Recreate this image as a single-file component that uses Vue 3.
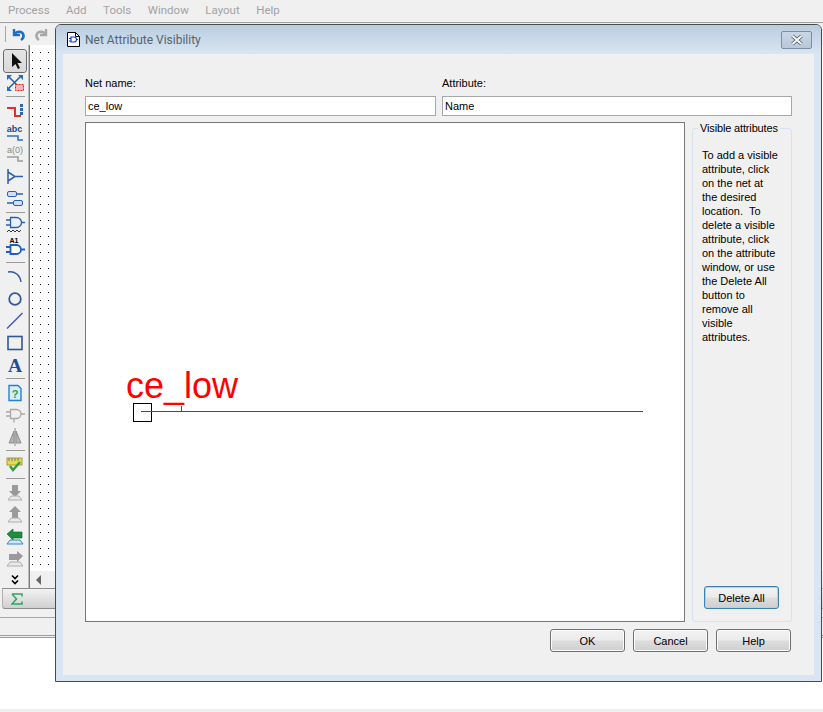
<template>
  <div class="app">
    <!-- Main application behind the dialog -->
    <div class="menubar">
      <span v-for="m in menus" :key="m" class="menu-item">{{ m }}</span>
    </div>
    <div class="toolbar">
      <span class="toolbar-sep"></span>
      <svg class="toolbar-icon" width="16" height="16" viewBox="0 0 16 16">
        <path d="M4 3v6h6" fill="none" stroke="#1c6fc4" stroke-width="2.4" />
        <path d="M4.5 8.5C7 4.5 13 5 13.5 9.5 13.7 11.5 12.5 13 11 14" fill="none" stroke="#1c6fc4" stroke-width="2.6" />
      </svg>
      <svg class="toolbar-icon" width="16" height="16" viewBox="0 0 16 16">
        <path d="M12 3v6H6" fill="none" stroke="#a8a8a8" stroke-width="2.4" />
        <path d="M11.5 8.5C9 4.5 3 5 2.5 9.5 2.3 11.5 3.5 13 5 14" fill="none" stroke="#a8a8a8" stroke-width="2.6" />
      </svg>
    </div>
    <div class="workspace">
      <div class="toolstrip">
        <div class="tool tool--active">
          <svg width="22" height="22" viewBox="0 0 22 22"><path d="M8 3v14l3.500-3 2.500 5 2-1-2.500-5H18z" fill="#111" /></svg>
        </div>
        <div class="tool">
          <svg width="22" height="22" viewBox="0 0 22 22">
            <path d="M4 4l13 13M17 4L4 17" stroke="#1f5fb0" stroke-width="1.500" />
            <path d="M3 3h5L3 8zM19 3v5l-5-5zM3 19v-5l5 5z" fill="#1f6fc4" />
            <rect x="11.500" y="12.500" width="8" height="6" fill="#f5b5b5" stroke="#e02020" stroke-dasharray="2 1" />
          </svg>
        </div>
        <div class="tool-sep"></div>
        <div class="tool">
          <svg width="22" height="22" viewBox="0 0 22 22">
            <path d="M3 8h8v8h6" fill="none" stroke="#e0302a" stroke-width="2" />
            <path d="M17.500 4v11" stroke="#2c63b5" stroke-width="3" stroke-dasharray="3 1" />
          </svg>
        </div>
        <div class="tool">
          <svg width="22" height="22" viewBox="0 0 22 22">
            <text x="10.500" y="10" class="tool-text tool-text--abc">abc</text>
            <path d="M3 14h11v4h5" fill="none" stroke="#2c6fc0" stroke-width="1.500" />
          </svg>
        </div>
        <div class="tool">
          <svg width="22" height="22" viewBox="0 0 22 22">
            <text x="11" y="9" class="tool-text tool-text--index">a(0)</text>
            <path d="M3 13h11v4h5" fill="none" stroke="#9a9a9a" stroke-width="1.500" />
          </svg>
        </div>
        <div class="tool">
          <svg width="22" height="22" viewBox="0 0 22 22">
            <path d="M4 3v15M4 6l7 4.500-7 4.500M11 10.500h8" fill="none" stroke="#2e5ea8" stroke-width="1.500" />
          </svg>
        </div>
        <div class="tool">
          <svg width="22" height="22" viewBox="0 0 22 22">
            <rect x="3.500" y="3.500" width="9" height="5" rx="1.500" fill="#cfe0f5" stroke="#2e5ea8" />
            <path d="M13 6h6M3 15h6" stroke="#2e5ea8" stroke-width="1.500" />
            <rect x="9.500" y="12.500" width="9" height="5" rx="1.500" fill="#cfe0f5" stroke="#2e5ea8" />
          </svg>
        </div>
        <div class="tool-sep"></div>
        <div class="tool">
          <svg width="22" height="22" viewBox="0 0 22 22">
            <path d="M6.500 1.500h6a5 5 0 0 1 0 10h-6z" fill="#e8f0fa" stroke="#2e5ea8" stroke-width="1.300" />
            <path d="M2 4h4M2 9h4M17.500 6.500H21" stroke="#2e5ea8" stroke-width="1.300" />
            <path d="M3 16l2-2 2 2 2-2 2 2 2-2 2 2 2-2" fill="none" stroke="#333" />
          </svg>
        </div>
        <div class="tool">
          <svg width="22" height="22" viewBox="0 0 22 22">
            <text x="10" y="5" class="tool-text tool-text--a1">A1</text>
            <path d="M6.500 7h6a4.500 4.500 0 0 1 0 9h-6z" fill="#fff" stroke="#1c5fc0" stroke-width="1.800" />
            <path d="M2 9h4M2 14h4M17.500 11.500H21" stroke="#1c5fc0" stroke-width="1.800" />
          </svg>
        </div>
        <div class="tool-sep"></div>
        <div class="tool">
          <svg width="22" height="22" viewBox="0 0 22 22"><path d="M4 6c7-1 12 3 13 10" fill="none" stroke="#33589f" stroke-width="1.500" /></svg>
        </div>
        <div class="tool">
          <svg width="22" height="22" viewBox="0 0 22 22"><circle cx="11" cy="11" r="5.800" fill="none" stroke="#33589f" stroke-width="1.800" /></svg>
        </div>
        <div class="tool">
          <svg width="22" height="22" viewBox="0 0 22 22"><path d="M3 18.500L18.500 3" stroke="#4a55a5" stroke-width="1.500" /></svg>
        </div>
        <div class="tool">
          <svg width="22" height="22" viewBox="0 0 22 22"><rect x="4" y="4.500" width="14" height="13" fill="none" stroke="#2d5a96" stroke-width="1.600" /></svg>
        </div>
        <div class="tool">
          <svg width="22" height="22" viewBox="0 0 22 22"><text x="11" y="17.500" class="tool-text tool-text--big">A</text></svg>
        </div>
        <div class="tool-sep"></div>
        <div class="tool">
          <svg width="22" height="22" viewBox="0 0 22 22">
            <path d="M5 3.500h9l3 3v12H5z" fill="#d8edfb" stroke="#2a7fd0" stroke-width="1.400" />
            <text x="11" y="16" class="tool-text tool-text--help">?</text>
          </svg>
        </div>
        <div class="tool">
          <svg width="22" height="22" viewBox="0 0 22 22">
            <path d="M6.500 5.500h6a4.500 4.500 0 0 1 0 9h-6z" fill="#efefef" stroke="#a8a8a8" stroke-width="1.300" />
            <path d="M2 8h4M2 12h4M17 10h4M10 14.500v4" stroke="#a8a8a8" stroke-width="1.300" />
          </svg>
        </div>
        <div class="tool">
          <svg width="22" height="22" viewBox="0 0 22 22">
            <path d="M10 5L5 17h5zM12 5l5 12h-5z" fill="#b4b4b4" stroke="#8e8e8e" />
            <path d="M11 2v18" stroke="#8e8e8e" />
          </svg>
        </div>
        <div class="tool-sep"></div>
        <div class="tool">
          <svg width="22" height="22" viewBox="0 0 22 22">
            <rect x="3" y="4" width="15" height="7" fill="#e8d84a" stroke="#a89e30" />
            <path d="M5 4v3M8 4v3M11 4v3M14 4v3" stroke="#6d7a9c" />
            <path d="M6 12l3 4 7-8" fill="none" stroke="#2f9e3c" stroke-width="2.400" />
          </svg>
        </div>
        <div class="tool-sep"></div>
        <div class="tool">
          <svg width="22" height="22" viewBox="0 0 22 22">
            <path d="M8 3h6v6h3l-6 6-6-6h3z" fill="#9a9a9a" />
            <path d="M7 14h8l3 4H4z" fill="#e9e9e9" stroke="#adadad" />
          </svg>
        </div>
        <div class="tool">
          <svg width="22" height="22" viewBox="0 0 22 22">
            <path d="M11 2l6 6h-3v7H8V8H5z" fill="#9a9a9a" />
            <path d="M7 14h8l3 4H4z" fill="#e9e9e9" stroke="#adadad" />
          </svg>
        </div>
        <div class="tool">
          <svg width="22" height="22" viewBox="0 0 22 22">
            <path d="M3 8l6-5v3h9v6H9v2z" fill="#1d8f3c" stroke="#0f5f26" stroke-width=".6" />
            <path d="M6 14h10l3 4H3z" fill="#cfe6fb" stroke="#3b82c8" />
          </svg>
        </div>
        <div class="tool">
          <svg width="22" height="22" viewBox="0 0 22 22">
            <path d="M19 8l-6-5v3H5v6h8v2z" fill="#9a9a9a" />
            <path d="M6 14h10l3 4H3z" fill="#e9e9e9" stroke="#adadad" />
          </svg>
        </div>
        <div class="tool tool--more">
          <svg width="12" height="12" viewBox="0 0 12 12">
            <path d="M3 1.500l3 3 3-3M3 6.500l3 3 3-3" fill="none" stroke="#000" stroke-width="1.600" />
          </svg>
        </div>
      </div>
      <div class="sheet">
        <div class="sheet-grid"></div>
        <div class="sheet-scroll">
          <svg width="6" height="10" viewBox="0 0 6 10"><path d="M5 0v10L0 5z" fill="#666" /></svg>
        </div>
      </div>
    </div>
    <div class="tabs">
      <div class="tab">
        <svg width="12" height="12" viewBox="0 0 12 12">
          <path d="M1 1h10v2.500M11 8.500V11H1l4.500-5L1 1" fill="none" stroke="#2ea864" stroke-width="1.500" />
        </svg>
      </div>
    </div>
    <div class="status-row"></div>
    <div class="blank"></div>
    <div class="footer"></div>

    <!-- Dialog window -->
    <div class="window">
      <div class="titlebar">
        <svg width="13" height="15" viewBox="0 0 13 15">
          <path d="M.5.500h8l4 4v10H.5z" fill="#fff" stroke="#000" />
          <path d="M8.500.500v4h4" fill="none" stroke="#000" />
          <path d="M4 5h3a2.500 2.500 0 0 1 0 5H4zM2 6.500h2M2 9h2M9.500 7.500H11" fill="none" stroke="#1438e0" stroke-width="1.200" />
        </svg>
        <span class="title">Net Attribute Visibility</span>
        <button class="close-btn" type="button">
          <svg width="14" height="12" viewBox="0 0 14 12">
            <path d="M2.500 2l9 8M11.500 2l-9 8" stroke="#45525f" stroke-width="3.600" />
            <path d="M2.500 2l9 8M11.500 2l-9 8" stroke="#fff" stroke-width="2" />
          </svg>
        </button>
      </div>
      <div class="client">
        <div class="fields">
          <label class="field">
            <span class="field-label">Net name:</span>
            <div class="field-input">ce_low</div>
          </label>
          <label class="field">
            <span class="field-label">Attribute:</span>
            <div class="field-input">Name</div>
          </label>
        </div>
        <div class="main">
          <div class="preview">
            <span class="net-label">ce_low</span>
            <svg class="net" width="520" height="22" viewBox="0 0 520 22">
              <rect x=".5" y=".5" width="18" height="18" fill="none" stroke="#000" />
              <path d="M8 8.500h502M48.500 3v5" fill="none" stroke="#f00" />
            </svg>
          </div>
          <fieldset class="group">
            <legend>Visible attributes</legend>
            <p class="group-text">
              <span v-for="(line, i) in helpLines" :key="i" class="group-line">{{ line }}</span>
            </p>
            <button class="btn btn--focus" type="button">Delete All</button>
          </fieldset>
        </div>
        <div class="actions">
          <button class="btn" type="button">OK</button>
          <button class="btn" type="button">Cancel</button>
          <button class="btn" type="button">Help</button>
        </div>
      </div>
    </div>
  </div>
</template>

<script setup>
const menus = ['Process', 'Add', 'Tools', 'Window', 'Layout', 'Help']

const helpLines = [
  'To add a visible',
  'attribute, click',
  'on the net at',
  'the desired',
  'location.  To',
  'delete a visible',
  'attribute, click',
  'on the attribute',
  'window, or use',
  'the Delete All',
  'button to',
  'remove all',
  'visible',
  'attributes.',
]
</script>

<style>
html,
body {
  margin: 0;
  background: #fff;
}
</style>

<style scoped>
.app {
  position: relative;
  width: 823px;
  height: 712px;
  overflow: hidden;
  display: flex;
  flex-direction: column;
  background: #fff;
  font-family: "Liberation Sans", Arial, sans-serif;
  font-size: 11px;
  color: #000;
}

.menubar {
  height: 23px;
  flex: none;
  display: flex;
  align-items: center;
  gap: 16.500px;
  padding-left: 8px;
  padding-bottom: 3px;
  background: #f0f0f0;
  border-bottom: 1px solid #a0a0a0;
  box-sizing: border-box;
  font-family: Roboto, sans-serif;
  font-size: 11.500px;
  color: #a3a3a3;
}

.toolbar {
  height: 22px;
  flex: none;
  display: flex;
  align-items: center;
  gap: 4px;
  padding-left: 5px;
  background: #f0f0f0;
}

.toolbar-sep {
  width: 1px;
  height: 16px;
  background: #a8a8a8;
}

.toolbar-icon {
  flex: none;
}

.toolbar-icon + .toolbar-icon {
  margin-left: 4px;
}

.workspace {
  flex: none;
  height: 543px;
  display: flex;
}

.toolstrip {
  width: 30px;
  flex: none;
  box-sizing: border-box;
  padding: 5px 0 0 4px;
  background: #f0f0f0;
  border-right: 1px solid #7c7c7c;
  box-shadow: inset -1px 0 #bdbdbd;
}

.tool {
  width: 22px;
  height: 22px;
}

.tool svg {
  display: block;
}

.tool--active {
  background: linear-gradient(#e4e4e4, #d8d8d8);
  border-radius: 3px;
  box-shadow: 0 0 0 1px #6a6a6a;
}

.tool--more {
  display: flex;
  justify-content: center;
  padding-top: 4px;
  height: 14px;
}

.tool-sep {
  width: 19px;
  height: 1px;
  margin: 2px 0 3px 2px;
  background: #9a9a9a;
}

.tool-text {
  text-anchor: middle;
  font-family: "Liberation Sans", Arial, sans-serif;
}

.tool-text--abc {
  font-size: 9px;
  font-weight: 700;
  fill: #27477e;
}

.tool-text--index {
  font-size: 9px;
  fill: #8a8a8a;
}

.tool-text--a1 {
  font-size: 7px;
  font-weight: 700;
  fill: #000;
}

.tool-text--big {
  font-family: "Liberation Serif", serif;
  font-size: 19.500px;
  font-weight: 700;
  fill: #1e4f97;
}

.tool-text--help {
  font-size: 11px;
  font-weight: 700;
  fill: #2f9e3c;
}

.sheet {
  flex: 1;
  display: flex;
  flex-direction: column;
}

.sheet-grid {
  flex: 1;
  background-color: #fff;
  background-image: conic-gradient(from 270deg at 1px 1px, #000 25%, #fff 0);
  background-size: 8px 8px;
  background-position: 2px 7px;
}

.sheet-scroll {
  height: 17px;
  display: flex;
  align-items: center;
  padding-left: 6px;
  background: #f0f0f0;
}

.tabs {
  flex: none;
  height: 30px;
  box-sizing: border-box;
  padding-left: 2px;
  background: #f0f0f0;
  border-bottom: 1px solid #a6a6a6;
}

.tab {
  height: 21px;
  box-sizing: border-box;
  display: flex;
  align-items: center;
  padding-left: 8px;
  border-top: 1px solid #8c8c8c;
  border-left: 1px solid #b0b0b0;
  border-bottom: 1px solid #8c8c8c;
  border-bottom-left-radius: 3px;
  background: linear-gradient(#f2f2f2, #d0d0d0);
}

.status-row {
  flex: none;
  height: 20px;
  box-sizing: border-box;
  background: #f0f0f0;
  border-bottom: 3px double #9a9a9a;
}

.blank {
  flex: 1;
  background: #fff;
}

.footer {
  flex: none;
  height: 3px;
  background: #efefef;
}

/* window sits on top of the main app */
.window {
  position: absolute;
  left: 55px;
  top: 24px;
  width: 767px;
  height: 658px;
  box-sizing: border-box;
  display: flex;
  flex-direction: column;
  padding: 0 7px 6px;
  background: #d9e5f2;
  border: 1px solid #4a4a4a;
  border-radius: 6px 6px 0 0;
}

.titlebar {
  height: 29px;
  flex: none;
  display: flex;
  align-items: center;
  gap: 5px;
  margin: 0 -7px;
  padding: 0 9px 0 11px;
  border-radius: 5px 5px 0 0;
  background: linear-gradient(#b9cde0, #d9e5f2);
}

.title {
  flex: 1;
  font-family: Roboto, sans-serif;
  font-size: 12px;
  color: #55636f;
}

.close-btn {
  width: 31px;
  height: 18px;
  padding: 0;
  display: flex;
  align-items: center;
  justify-content: center;
  border: 1px solid #7d8ea4;
  border-radius: 2px;
  background: linear-gradient(#c9d6e4, #b8c8da);
}

.client {
  flex: 1;
  min-height: 0;
  display: flex;
  flex-direction: column;
  box-sizing: border-box;
  padding: 23px 22px 23px;
  background: #f0f0f0;
}

.fields {
  display: grid;
  grid-template-columns: 351px 350px;
  gap: 6px;
}

.field {
  display: flex;
  flex-direction: column;
  gap: 6px;
}

.field-label {
  line-height: 13px;
}

.field-input {
  height: 20px;
  box-sizing: border-box;
  padding-left: 2px;
  line-height: 18px;
  background: #fff;
  border: 1px solid #a8a8a8;
}

.main {
  flex: 1;
  min-height: 0;
  display: flex;
  gap: 7px;
  margin-top: 6px;
}

.preview {
  position: relative;
  width: 600px;
  box-sizing: border-box;
  background: #fff;
  border: 1px solid #7a7a7a;
}

.net-label {
  position: absolute;
  left: 40px;
  top: 243px;
  font-size: 36px;
  line-height: 40px;
  color: #f00;
}

.net {
  position: absolute;
  left: 47px;
  top: 280px;
}

.group {
  width: 100px;
  box-sizing: border-box;
  margin: 0;
  padding: 0 0 12px;
  display: flex;
  flex-direction: column;
  border: 1px solid #d8e2ee;
  border-radius: 3px;
  min-width: 0;
}

.group legend {
  margin-left: 5px;
  padding: 0 2px;
  line-height: 13px;
  letter-spacing: -0.15px;
}

.group-text {
  flex: 1;
  margin: 13px 0 0 9px;
  line-height: 14px;
}

.group-line {
  display: block;
  white-space: pre;
}

.group .btn {
  align-self: flex-start;
  margin-left: 11px;
}

.actions {
  display: flex;
  justify-content: flex-end;
  gap: 8px;
  margin-top: 7px;
  padding-right: 1px;
}

.btn {
  width: 75px;
  height: 23px;
  padding: 0;
  font-family: inherit;
  font-size: 11px;
  color: #000;
  border: 1px solid #707070;
  border-radius: 3px;
  background: linear-gradient(#f2f2f2 0, #ebebeb 48%, #dddddd 52%, #cfcfcf 100%);
  box-shadow: inset 0 0 0 1px #fcfcfc;
}

.btn--focus {
  border-color: #3c7fb1;
  box-shadow: inset 0 0 0 1px #a0d8f0;
}
</style>
